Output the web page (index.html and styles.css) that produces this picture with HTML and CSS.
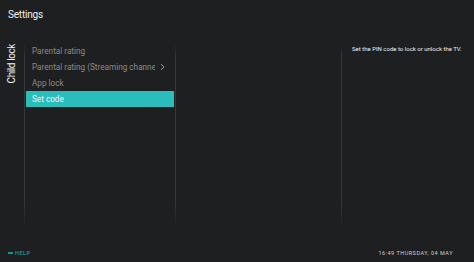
FILE: index.html
```html
<!DOCTYPE html>
<html lang="en">
<head>
    <meta charset="UTF-8">
    <title>Settings - Child lock</title>
    <link rel="stylesheet" href="styles.css">
</head>
<body>
    <div class="screen">
        <div class="header">Settings</div>

        <div class="main">
            <div class="section-label"><span>Child lock</span></div>
            <div class="divider"></div>

            <ul class="menu">
                <li class="menu-item">Parental rating</li>
                <li class="menu-item has-sub">
                    <span class="item-text">Parental rating (Streaming channels)</span>
                    <svg class="chevron" width="5" height="8" viewBox="0 0 5 8">
                        <path d="M1 1 L4 4 L1 7" fill="none" stroke="#9a9a9a" stroke-width="1"/>
                    </svg>
                </li>
                <li class="menu-item">App lock</li>
                <li class="menu-item selected">Set code</li>
            </ul>
            <div class="divider"></div>

            <div class="sub-panel"></div>
            <div class="divider"></div>

            <div class="info">Set the PIN code to lock or unlock the TV.</div>
        </div>

        <div class="footer">
            <div class="help"><span class="help-bar"></span>HELP</div>
            <div class="clock">16:49 THURSDAY, 04 MAY</div>
        </div>
    </div>
</body>
</html>
```

FILE: styles.css
```css
* {
    box-sizing: border-box;
}

body {
    margin: 0;
    background-color: #1e1f21;
    font-family: Roboto, 'Liberation Sans', sans-serif;
    color: #e6e6e6;
}

.screen {
    width: 474px;
    height: 262px;
    display: flex;
    flex-direction: column;
}

.header {
    height: 43px;
    padding: 9px 0 0 8px;
    font-size: 10px;
    letter-spacing: -0.2px;
    color: #f0f0f0;
}

.main {
    height: 185px;
    display: flex;
}

.section-label {
    width: 24px;
    display: flex;
    justify-content: center;
    align-items: flex-start;
}

.section-label span {
    writing-mode: vertical-rl;
    transform: rotate(180deg);
    white-space: nowrap;
    font-size: 10px;
    letter-spacing: -0.4px;
    color: #f0f0f0;
    margin-top: 1px;
    margin-right: 1px;
}

.divider {
    width: 1px;
    background: linear-gradient(to bottom, rgba(58, 59, 62, 0) 0%, #37383b 8%, #37383b 85%, rgba(58, 59, 62, 0) 100%);
}

.menu {
    list-style: none;
    margin: 0;
    padding: 0 1px;
    width: 150px;
}

.menu-item {
    height: 16px;
    line-height: 16px;
    padding-left: 6px;
    font-size: 8.2px;
    color: #8a8a8a;
    white-space: nowrap;
    overflow: hidden;
    display: flex;
    align-items: center;
}

.menu-item.has-sub {
    justify-content: space-between;
    padding-right: 9px;
}

.item-text {
    width: 123px;
    overflow: hidden;
    white-space: nowrap;
}

.chevron {
    flex: none;
}

.menu-item.selected {
    background-color: #2bbcbc;
    color: #f4f4f4;
}

.sub-panel {
    width: 165px;
}

.info {
    flex: 1;
    padding: 2px 0 0 10px;
    font-size: 6px;
    color: #f0f0f0;
}

.footer {
    flex: 1;
    display: flex;
    justify-content: space-between;
    align-items: flex-start;
    padding: 22px 21px 0 8px;
    font-size: 5.5px;
    letter-spacing: 0.5px;
}

.help {
    display: flex;
    align-items: center;
    color: #1f8c96;
    font-weight: bold;
}

.help-bar {
    width: 5px;
    height: 1.5px;
    background-color: #1f8c96;
    margin-right: 2px;
}

.clock {
    color: #cfcfcf;
}
```
